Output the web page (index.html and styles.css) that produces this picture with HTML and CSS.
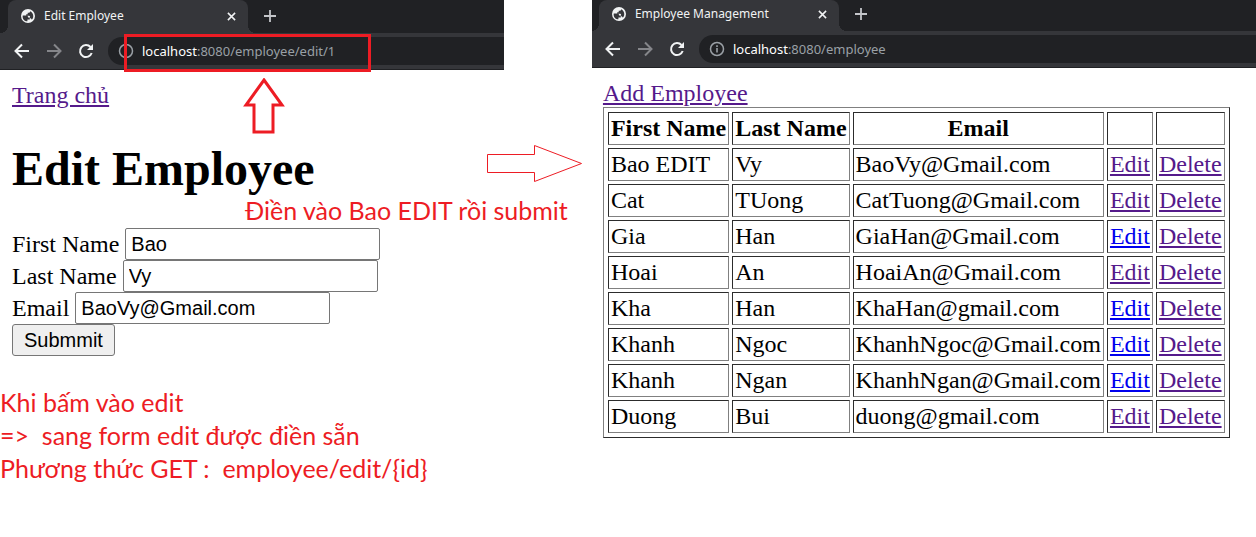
FILE: index.html
```
<!DOCTYPE html>
<html lang="vi">
<head>
<meta charset="utf-8">
<title>Edit Employee</title>
<link rel="stylesheet" href="styles.css">
</head>
<body>
<svg class="defs" width="0" height="0" aria-hidden="true">
  <symbol id="globe" viewBox="0 0 24 24"><path fill="currentColor" d="M12 0a12 12 0 1 0 0 24 12 12 0 0 0 0-24zM3 11h6c3 0 3 2 3 3.500h3V18h-4v3C6 21 2 17 3 11zm18 1c0 3-1 5-2.500 6.500C18 17 17 16 15.500 16v-3c0-1-1-1.500-2-1.500H9V9h2.500V6.500H14c1 0 1.500-1 1.500-2.500 3.500 1.500 5.500 4.500 5.500 8z"/></symbol>
  <symbol id="close" viewBox="0 0 10 10"><path fill="none" stroke="currentColor" stroke-width="1.7" d="M1 1l8 8M9 1l-8 8"/></symbol>
  <symbol id="plus" viewBox="0 0 12 12"><path fill="none" stroke="currentColor" stroke-width="1.8" d="M6 0v12M0 6h12"/></symbol>
  <symbol id="back" viewBox="0 0 16 16"><path fill="none" stroke="currentColor" stroke-width="2" d="M15 8H2M8 1.500L1.500 8 8 14.500"/></symbol>
  <symbol id="forward" viewBox="0 0 16 16"><path fill="none" stroke="currentColor" stroke-width="2" d="M1 8h13M8 1.500L14.500 8 8 14.500"/></symbol>
  <symbol id="reload" viewBox="0 0 16 16"><path fill="none" stroke="currentColor" stroke-width="2" d="M13.700 10A6 6 0 1 1 12.500 4"/><path fill="currentColor" d="M15 1v6H9z"/></symbol>
  <symbol id="info" viewBox="0 0 16 16"><circle cx="8" cy="8" r="6.500" fill="none" stroke="currentColor" stroke-width="1.500"/><path fill="currentColor" d="M7.200 7h1.600v4.500H7.200zM7.200 4.300h1.600v1.600H7.200z"/></symbol>
</svg>
<main class="screens">
  <section class="screen">
    <header class="chrome">
      <div class="tabs">
        <div class="tab"><svg class="favicon"><use href="#globe"/></svg><span class="tab-title">Edit Employee</span><button class="icon-btn" aria-label="Close tab"><svg class="close"><use href="#close"/></svg></button></div>
        <button class="icon-btn new-tab" aria-label="New tab"><svg class="plus"><use href="#plus"/></svg></button>
      </div>
      <div class="toolbar">
        <button class="icon-btn" aria-label="Back"><svg class="nav"><use href="#back"/></svg></button>
        <button class="icon-btn muted" aria-label="Forward"><svg class="nav"><use href="#forward"/></svg></button>
        <button class="icon-btn" aria-label="Reload"><svg class="nav"><use href="#reload"/></svg></button>
        <div class="address"><svg class="info"><use href="#info"/></svg><span><span class="host">localhost</span>:8080/employee/edit/1</span></div>
      </div>
    </header>
    <div class="page">
      <a class="visited" href="#">Trang chủ</a>
      <h1>Edit Employee</h1>
      <form>
        <div class="field"><label for="first">First Name</label><input id="first" type="text" value="Bao"></div>
        <div class="field"><label for="last">Last Name</label><input id="last" type="text" value="Vy"></div>
        <div class="field"><label for="email">Email</label><input id="email" type="text" value="BaoVy@Gmail.com"></div>
        <button class="submit" type="button">Submmit</button>
      </form>
    </div>
    <p class="note steps">Khi bấm vào edit
=&gt;  sang form edit được điền sẵn
Phương thức GET :  employee/edit/{id}</p>
    <div class="url-mark"></div>
    <svg class="arrow-up" viewBox="0 0 42 56"><path fill="none" stroke="#ed1c24" stroke-width="3" d="M21 2L39 27H30V54H11V27H3z"/></svg>
    <p class="note fill-note">Điền vào Bao EDIT rồi submit</p>
    <svg class="arrow-right" viewBox="0 0 96 38"><path fill="none" stroke="#ed1c24" d="M.5 9.500H47.500V.5L94.500 18.500 47.500 36.500V27.500H.5z"/></svg>
  </section>

  <section class="screen second">
    <header class="chrome compact">
      <div class="tabs">
        <div class="tab"><svg class="favicon"><use href="#globe"/></svg><span class="tab-title">Employee Management</span><button class="icon-btn" aria-label="Close tab"><svg class="close"><use href="#close"/></svg></button></div>
        <button class="icon-btn new-tab" aria-label="New tab"><svg class="plus"><use href="#plus"/></svg></button>
      </div>
      <div class="toolbar">
        <button class="icon-btn" aria-label="Back"><svg class="nav"><use href="#back"/></svg></button>
        <button class="icon-btn muted" aria-label="Forward"><svg class="nav"><use href="#forward"/></svg></button>
        <button class="icon-btn" aria-label="Reload"><svg class="nav"><use href="#reload"/></svg></button>
        <div class="address"><svg class="info"><use href="#info"/></svg><span><span class="host">localhost</span>:8080/employee</span></div>
      </div>
    </header>
    <div class="page">
      <a class="visited" href="#">Add Employee</a>
      <table class="employees">
        <thead><tr><th>First Name</th><th>Last Name</th><th>Email</th><th></th><th></th></tr></thead>
        <tbody>
          <tr><td>Bao EDIT</td><td>Vy</td><td>BaoVy@Gmail.com</td><td><a class="visited" href="#">Edit</a></td><td><a class="visited" href="#">Delete</a></td></tr>
          <tr><td>Cat</td><td>TUong</td><td>CatTuong@Gmail.com</td><td><a class="visited" href="#">Edit</a></td><td><a class="visited" href="#">Delete</a></td></tr>
          <tr><td>Gia</td><td>Han</td><td>GiaHan@Gmail.com</td><td><a class="fresh" href="#">Edit</a></td><td><a class="visited" href="#">Delete</a></td></tr>
          <tr><td>Hoai</td><td>An</td><td>HoaiAn@Gmail.com</td><td><a class="visited" href="#">Edit</a></td><td><a class="visited" href="#">Delete</a></td></tr>
          <tr><td>Kha</td><td>Han</td><td>KhaHan@gmail.com</td><td><a class="fresh" href="#">Edit</a></td><td><a class="visited" href="#">Delete</a></td></tr>
          <tr><td>Khanh</td><td>Ngoc</td><td>KhanhNgoc@Gmail.com</td><td><a class="fresh" href="#">Edit</a></td><td><a class="visited" href="#">Delete</a></td></tr>
          <tr><td>Khanh</td><td>Ngan</td><td>KhanhNgan@Gmail.com</td><td><a class="fresh" href="#">Edit</a></td><td><a class="visited" href="#">Delete</a></td></tr>
          <tr><td>Duong</td><td>Bui</td><td>duong@gmail.com</td><td><a class="visited" href="#">Edit</a></td><td><a class="visited" href="#">Delete</a></td></tr>
        </tbody>
      </table>
    </div>
  </section>
</main>
</body>
</html>
```
FILE: styles.css
```
* { box-sizing: border-box; }
body { margin: 0; background: #fff; color: #000; font: 24px/27px "Liberation Serif", serif; }
.defs { position: absolute; }
.screens { display: grid; grid-template-columns: 504fr 664fr; column-gap: 7%; align-items: start; }
.screen { position: relative; min-width: 0; }

.chrome { background: #35363a; color: #f1f3f4; border-bottom: 1px solid #202124; font: 12px/16px "Noto Sans", sans-serif; overflow: hidden; }
.tabs { display: flex; align-items: stretch; height: 33px; padding-left: 8px; background: #202124; }
.compact .tabs { height: 31px; padding-left: 7px; }
.tab { position: relative; display: flex; align-items: center; width: 240px; padding: 0 12px 1px 13px; background: #35363a; border-radius: 8px 8px 0 0; }
.compact .tab, .compact .new-tab { padding-bottom: 3px; }
.tab::before, .tab::after { content: ""; position: absolute; bottom: 0; width: 8px; height: 8px; }
.tab::before { left: -8px; background: radial-gradient(circle at 0 0, #202124 8px, #35363a 8px); }
.tab::after { right: -8px; background: radial-gradient(circle at 100% 0, #202124 8px, #35363a 8px); }
.tab-title { flex: 1; margin-left: 9px; white-space: nowrap; }
.icon-btn { display: flex; align-items: center; padding: 0; border: 0; background: none; color: #f1f3f4; }
.muted { color: #85868a; }
.new-tab { margin-left: 16px; padding-bottom: 1px; color: #c4c6ca; }
.favicon { width: 14px; height: 14px; }
.close { width: 9px; height: 9px; }
.plus { width: 12px; height: 12px; }
.nav { width: 16px; height: 16px; }
.info { width: 16px; height: 16px; color: #9aa0a6; }
.toolbar { display: flex; align-items: center; gap: 16px; padding: 4px 0 4px 14px; }
.compact .toolbar { padding-left: 13px; }
.address { display: flex; flex: 1; align-items: center; gap: 8px; height: 28px; margin-left: -2px; padding-left: 10px; border-radius: 14px 0 0 14px; background: #202124; color: #9aa0a6; font-size: 13px; }
.host { color: #fff; }

.page { padding: 12px; }
.second .page { padding-left: 11px; }
.visited { color: #551a8b; }
.fresh { color: #00e; }
h1 { margin: 32px 0; font-size: 48px; line-height: 55px; }
.field { display: flex; align-items: center; gap: 6px; height: 32px; }
.field input { width: 255px; height: 32px; padding: 2px 5px; border: 1px solid #767676; border-radius: 2px; background: #fff; color: #000; font: 20px/24px "Liberation Sans", sans-serif; }
.submit { display: block; height: 32px; padding: 1px 11px; border: 1px solid #767676; border-radius: 3px; background: #efefef; color: #000; font: 20px/24px "Liberation Sans", sans-serif; }

.employees { border: 1px solid; border-color: #808080 #2c2c2c #2c2c2c #808080; border-spacing: 3px; padding: 1px; }
.employees th, .employees td { height: 33px; padding: 2px; border: 1px solid; border-color: #2c2c2c #808080 #808080 #2c2c2c; white-space: nowrap; }

.note { margin: 0; color: #ed1c24; font: 25px/33px Lato, "Noto Sans", sans-serif; white-space: pre; }
.steps { margin-top: 18px; }
.fill-note { position: absolute; left: 245px; top: 194px; }
.url-mark { position: absolute; left: 124px; top: 34px; width: 247px; height: 38px; border: 3px solid #ed1c24; }
.arrow-up { position: absolute; left: 243px; top: 78px; width: 42px; height: 56px; }
.arrow-right { position: absolute; left: 487px; top: 145px; width: 96px; height: 38px; }
```
